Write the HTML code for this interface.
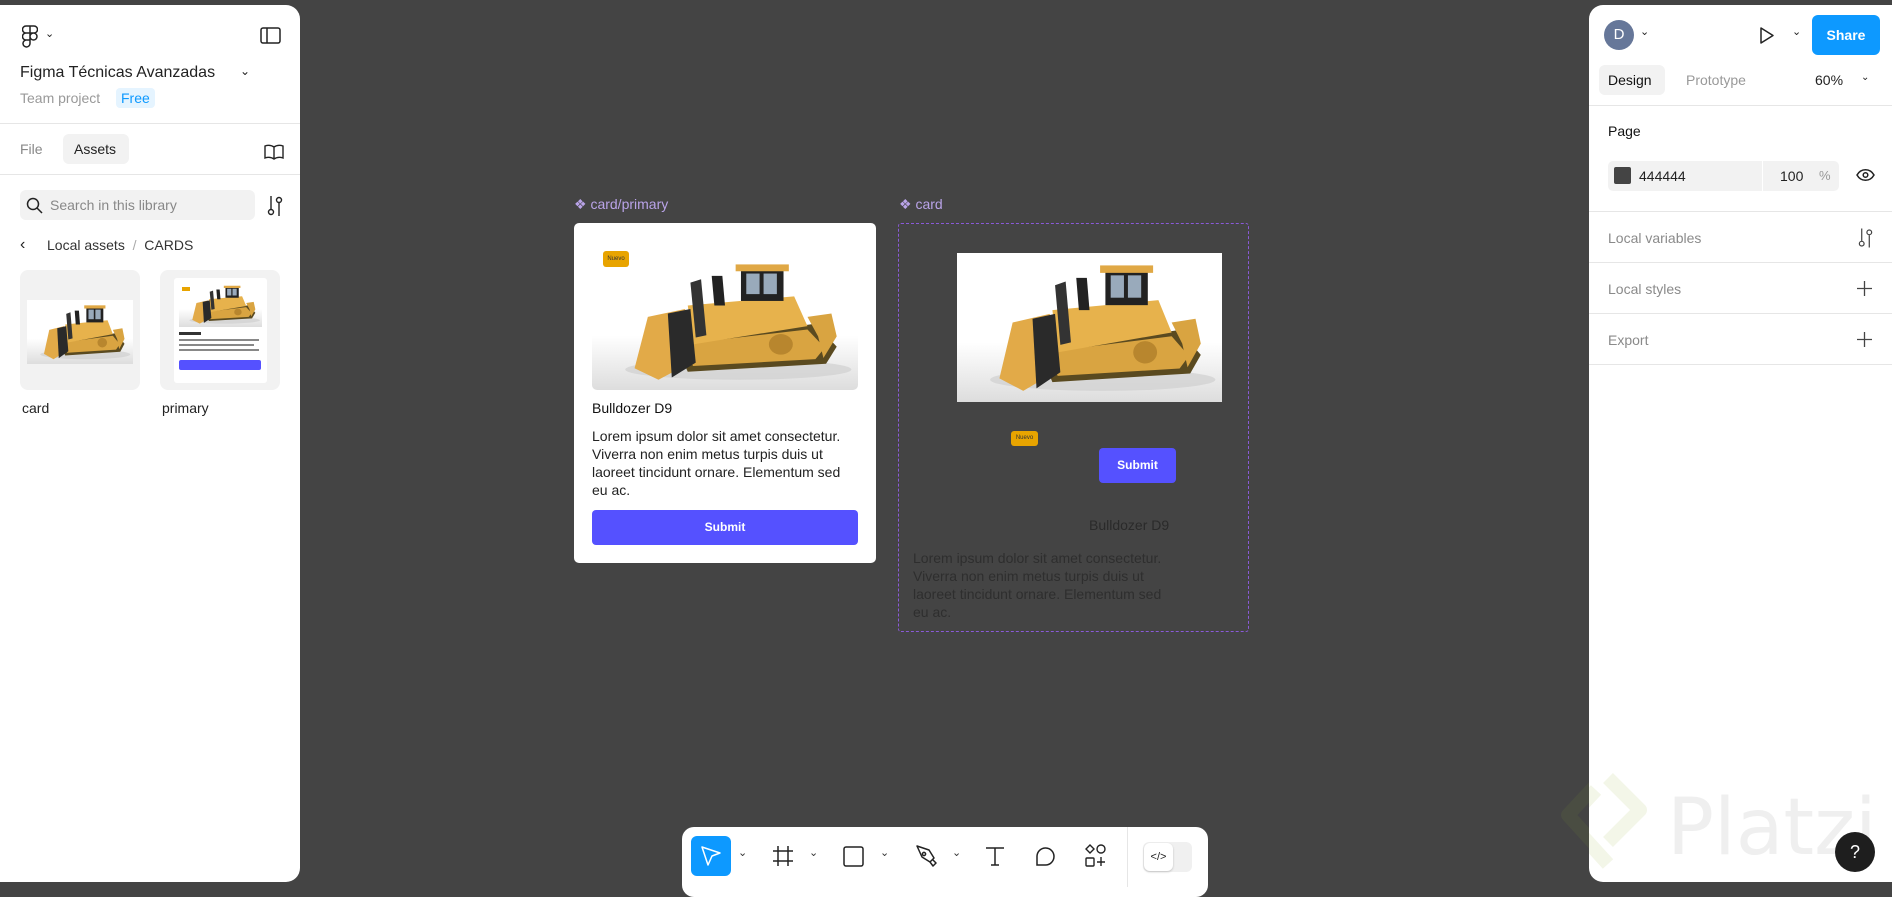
<!DOCTYPE html>
<html><head><meta charset="utf-8"><style>
*{box-sizing:border-box;margin:0;padding:0}
body{width:1892px;height:885px;background:#444;font-family:"Liberation Sans",sans-serif;position:relative;overflow:hidden;color:#222}
.a{position:absolute}
.panel{background:#fff;border-radius:14px}
.hr{position:absolute;left:0;right:0;height:1px;background:#e6e6e6}
.t{position:absolute;white-space:nowrap;line-height:1}
</style></head><body>
<svg width="0" height="0" style="position:absolute">
<defs>
<linearGradient id="g" x1="0" y1="0" x2="0" y2="1"><stop offset="0.6" stop-color="#fff"/><stop offset="1" stop-color="#ddd"/></linearGradient>
<symbol id="dz" viewBox="0 0 200 120" preserveAspectRatio="none">
<rect width="200" height="120" fill="url(#g)"/>
<ellipse cx="110" cy="102" rx="85" ry="9" fill="#ccc" opacity=".6"/>
<path d="M62 78 L168 62 L184 82 L176 97 L72 104 Z" fill="#5a4a20"/>
<path d="M66 80 L162 67 L175 83 L168 93 L76 99 Z" fill="#d9a441"/>
<path d="M72 46 L152 38 L162 64 L76 80 Z" fill="#e7b24c"/>
<rect x="112" y="14" width="32" height="28" fill="#222"/>
<rect x="116" y="18" width="10" height="18" fill="#9ab"/><rect x="129" y="18" width="10" height="18" fill="#9ab"/>
<rect x="108" y="10" width="40" height="6" fill="#e0a845"/>
<path d="M90 20 L98 20 L100 46 L92 46 Z" fill="#222"/>
<path d="M74 26 L82 23 L86 72 L78 74 Z" fill="#333"/>
<path d="M42 56 L70 49 L74 96 L50 111 L32 101 Z" fill="#e2aa48"/>
<path d="M57 53 L74 49 L78 96 L60 109 Z" fill="#2a2a2a"/>
<path d="M162 56 L180 53 L184 73 L174 92 L170 73 Z" fill="#d9a441"/>
<circle cx="142" cy="80" r="9" fill="#b8862e"/>
</symbol>
</defs></svg>

<!-- Left panel -->
<div class="a panel" style="left:0;top:5px;width:300px;height:877px;border-radius:0 14px 14px 0">
<svg class="a" style="left:22px;top:20px" width="16" height="24" viewBox="0 0 16 24" fill="none" stroke="#222" stroke-width="1.5"><path d="M4 1h4v7H4a3.5 3.5 0 010-7zM8 1h4a3.5 3.5 0 010 7H8zM4 8h4v7H4a3.5 3.5 0 010-7zM8 11.5a3.5 3.5 0 107 0 3.5 3.5 0 10-7 0zM4 15h4v3.5A3.5 3.5 0 114 15z"/></svg>
<div class="t" style="left:45px;top:24px;font-size:11px">⌄</div>
<svg class="a" style="left:260px;top:22px" width="21" height="17" viewBox="0 0 21 17" fill="none" stroke="#222" stroke-width="1.5"><rect x="1" y="1" width="19" height="15" rx="2"/><path d="M7 1v15"/></svg>
<div class="t" style="left:20px;top:60px;font-size:16px;color:#222">Figma Técnicas Avanzadas</div>
<div class="t" style="left:240px;top:60px;font-size:12px">⌄</div>
<div class="t" style="left:20px;top:86px;font-size:14px;color:#999">Team project</div>
<div class="a" style="left:116px;top:83px;width:39px;height:20px;background:#e5f4ff;border-radius:4px"></div>
<div class="t" style="left:121px;top:86px;font-size:14px;color:#0d99ff">Free</div>
<div class="hr" style="top:118px"></div>
<div class="t" style="left:20px;top:137px;font-size:14px;color:#888">File</div>
<div class="a" style="left:63px;top:129px;width:66px;height:30px;background:#f2f2f2;border-radius:6px"></div>
<div class="t" style="left:74px;top:137px;font-size:14px;color:#222">Assets</div>
<svg class="a" style="left:264px;top:139px" width="20" height="16" viewBox="0 0 20 16" fill="none" stroke="#222" stroke-width="1.4"><path d="M10 3C7 1 4 1 1 2v12c3-1 6-1 9 1 3-2 6-2 9-1V2c-3-1-6-1-9 1zM10 3v12"/></svg>
<div class="hr" style="top:169px"></div>
<div class="a" style="left:20px;top:185px;width:235px;height:30px;background:#f2f2f2;border-radius:6px"></div>
<svg class="a" style="left:26px;top:192px" width="17" height="17" viewBox="0 0 17 17" fill="none" stroke="#222" stroke-width="1.5"><circle cx="7" cy="7" r="5.5"/><path d="M11 11l5 5"/></svg>
<div class="t" style="left:50px;top:193px;font-size:14px;color:#888">Search in this library</div>
<svg class="a" style="left:266px;top:190px" width="18" height="22" viewBox="0 0 18 22" fill="none" stroke="#222" stroke-width="1.4"><path d="M5 1v13M13 8v13"/><circle cx="5" cy="17" r="2.5"/><circle cx="13" cy="5" r="2.5"/></svg>
<div class="t" style="left:20px;top:232px;font-size:16px;color:#222">‹</div>
<div class="t" style="left:47px;top:233px;font-size:14px;color:#333">Local assets <span style="color:#aaa">&nbsp;/&nbsp;</span> CARDS</div>
<div class="a" style="left:20px;top:265px;width:120px;height:120px;background:#f2f2f2;border-radius:8px"></div>
<svg class="a" style="left:27px;top:295px" width="106" height="64"><use href="#dz" width="106" height="64"/></svg>
<div class="a" style="left:160px;top:265px;width:120px;height:120px;background:#f2f2f2;border-radius:8px"></div>
<div class="a" style="left:174px;top:273px;width:93px;height:105px;background:#fff;border-radius:3px">
<svg class="a" style="left:5px;top:4px" width="83" height="45"><use href="#dz" width="83" height="45"/></svg>
<div class="a" style="left:8px;top:9px;width:8px;height:4px;background:#e8a400"></div>
<div class="a" style="left:5px;top:54px;width:22px;height:3px;background:#333"></div>
<div class="a" style="left:5px;top:61px;width:80px;height:2px;background:#888"></div>
<div class="a" style="left:5px;top:66px;width:75px;height:2px;background:#888"></div>
<div class="a" style="left:5px;top:71px;width:80px;height:2px;background:#888"></div>
<div class="a" style="left:5px;top:82px;width:82px;height:10px;background:#5551ff;border-radius:2px"></div>
</div>
<div class="t" style="left:22px;top:396px;font-size:14px;color:#222">card</div>
<div class="t" style="left:162px;top:396px;font-size:14px;color:#222">primary</div>
</div>

<!-- canvas: card/primary -->
<div class="t" style="left:574px;top:197px;font-size:14px;color:#b9a3e8">❖ card/primary</div>
<div class="a" style="left:574px;top:223px;width:302px;height:340px;background:#fff;border-radius:5px">
<svg class="a" style="left:18px;top:30px;border-radius:5px" width="266" height="137"><use href="#dz" width="266" height="137"/></svg>
<div class="a" style="left:29px;top:28px;width:26px;height:16px;background:#e8a400;border-radius:3px;font-size:6px;line-height:16px;text-align:center;color:#333">Nuevo</div>
<div class="t" style="left:18px;top:178px;font-size:14px;color:#111">Bulldozer D9</div>
<div class="a" style="left:18px;top:204px;width:262px;font-size:14px;line-height:18px;color:#222">Lorem ipsum dolor sit amet consectetur. Viverra non enim metus turpis duis ut laoreet tincidunt ornare. Elementum sed eu ac.</div>
<div class="a" style="left:18px;top:287px;width:266px;height:35px;background:#5551ff;border-radius:4px;color:#fff;font-size:12px;font-weight:bold;line-height:35px;text-align:center">Submit</div>
</div>

<!-- canvas: card -->
<div class="t" style="left:899px;top:197px;font-size:14px;color:#b9a3e8">❖ card</div>
<div class="a" style="left:898px;top:223px;width:351px;height:409px;border:1.3px dashed #8a5ad8;border-radius:3px"></div>
<svg class="a" style="left:957px;top:253px" width="265" height="149"><use href="#dz" width="265" height="149"/></svg>
<div class="a" style="left:1011px;top:431px;width:27px;height:15px;background:#e8a400;border-radius:3px;font-size:6px;line-height:15px;text-align:center;color:#333">Nuevo</div>
<div class="a" style="left:1099px;top:448px;width:77px;height:35px;background:#5551ff;border-radius:4px;color:#fff;font-size:12px;font-weight:bold;line-height:35px;text-align:center">Submit</div>
<div class="t" style="left:1089px;top:518px;font-size:14px;color:#2a2a2a">Bulldozer D9</div>
<div class="a" style="left:913px;top:549px;width:262px;font-size:14px;line-height:18px;color:#2e2e2e">Lorem ipsum dolor sit amet consectetur. Viverra non enim metus turpis duis ut laoreet tincidunt ornare. Elementum sed eu ac.</div>

<!-- toolbar -->
<div class="a" style="left:682px;top:827px;width:526px;height:70px;background:#fff;border-radius:12px">
<div class="a" style="left:9px;top:9px;width:40px;height:40px;background:#0d99ff;border-radius:6px"></div>
<svg class="a" style="left:18px;top:18px" width="22" height="22" viewBox="0 0 22 22" fill="none" stroke="#fff" stroke-width="1.5" stroke-linejoin="round"><path d="M2 2l18 6-8 3-4 9z"/></svg>
<div class="t" style="left:56px;top:21px;font-size:11px;color:#333">⌄</div>
<svg class="a" style="left:90px;top:18px" width="22" height="22" viewBox="0 0 22 22" fill="none" stroke="#222" stroke-width="1.5"><path d="M6 1v20M16 1v20M1 6h20M1 16h20"/></svg>
<div class="t" style="left:127px;top:21px;font-size:11px;color:#333">⌄</div>
<svg class="a" style="left:161px;top:19px" width="21" height="21" viewBox="0 0 21 21" fill="none" stroke="#222" stroke-width="1.5"><rect x="1" y="1" width="19" height="19" rx="2"/></svg>
<div class="t" style="left:198px;top:21px;font-size:11px;color:#333">⌄</div>
<svg class="a" style="left:233px;top:17px" width="22" height="24" viewBox="0 0 22 24" fill="none" stroke="#222" stroke-width="1.5" stroke-linejoin="round"><path d="M2 2l12 4 5 8-4 4-8-5zM15 18l3 4 3-3-3-3"/><circle cx="9" cy="10" r="1.6"/></svg>
<div class="t" style="left:270px;top:21px;font-size:11px;color:#333">⌄</div>
<svg class="a" style="left:303px;top:19px" width="20" height="20" viewBox="0 0 20 20" fill="none" stroke="#222" stroke-width="1.5"><path d="M1 2h18M10 2v17M6 19h8"/></svg>
<svg class="a" style="left:353px;top:19px" width="22" height="21" viewBox="0 0 22 21" fill="none" stroke="#222" stroke-width="1.5"><path d="M2 19V10a8.5 8.5 0 118.5 9z"/></svg>
<svg class="a" style="left:403px;top:17px" width="22" height="24" viewBox="0 0 22 24" fill="none" stroke="#222" stroke-width="1.4"><path d="M5 1l4 4-4 4-4-4z"/><circle cx="16" cy="5" r="4"/><rect x="1" y="14" width="8" height="8" rx="1"/><path d="M16 13v9M12 18h8"/></svg>
<div class="a" style="left:445px;top:0;width:1px;height:60px;background:#e6e6e6"></div>
<div class="a" style="left:461px;top:15px;width:49px;height:30px;background:#f0f0f0;border-radius:6px"></div>
<div class="a" style="left:462px;top:16px;width:29px;height:28px;background:#fff;border-radius:6px;box-shadow:0 1px 2px rgba(0,0,0,.2);font-size:11px;line-height:28px;text-align:center;color:#222">&lt;/&gt;</div>
</div>

<!-- Right panel -->
<div class="a panel" style="left:1589px;top:5px;width:303px;height:877px;border-radius:14px 0 0 14px;overflow:hidden">
<div class="a" style="left:15px;top:15px;width:30px;height:30px;border-radius:50%;background:#667799;color:#fff;font-size:15px;line-height:30px;text-align:center">D</div>
<div class="t" style="left:51px;top:22px;font-size:11px">⌄</div>
<svg class="a" style="left:170px;top:21px" width="16" height="19" viewBox="0 0 16 19" fill="none" stroke="#222" stroke-width="1.5" stroke-linejoin="round"><path d="M2 2l12 7.5L2 17z"/></svg>
<div class="t" style="left:203px;top:22px;font-size:11px">⌄</div>
<div class="a" style="left:223px;top:10px;width:68px;height:40px;background:#0d99ff;border-radius:6px;color:#fff;font-size:14px;font-weight:bold;line-height:40px;text-align:center">Share</div>
<div class="a" style="left:10px;top:60px;width:66px;height:30px;background:#f2f2f2;border-radius:6px"></div>
<div class="t" style="left:19px;top:68px;font-size:14px;color:#111">Design</div>
<div class="t" style="left:97px;top:68px;font-size:14px;color:#999">Prototype</div>
<div class="t" style="left:226px;top:68px;font-size:14px;color:#222">60%</div>
<div class="t" style="left:272px;top:68px;font-size:10px">⌄</div>
<div class="hr" style="top:100px"></div>
<div class="t" style="left:19px;top:119px;font-size:14px;color:#111">Page</div>
<div class="a" style="left:19px;top:156px;width:231px;height:30px;background:#f2f2f2;border-radius:5px"></div>
<div class="a" style="left:173px;top:156px;width:1px;height:30px;background:#fff"></div>
<div class="a" style="left:25px;top:162px;width:17px;height:17px;background:#444;border-radius:2px"></div>
<div class="t" style="left:50px;top:164px;font-size:14px;color:#222">444444</div>
<div class="t" style="left:191px;top:164px;font-size:14px;color:#222">100</div>
<div class="t" style="left:230px;top:164px;font-size:13px;color:#999">%</div>
<svg class="a" style="left:267px;top:163px" width="19" height="14" viewBox="0 0 19 14" fill="none" stroke="#222" stroke-width="1.5"><path d="M1 7c4-7 13-7 17 0-4 7-13 7-17 0z"/><circle cx="9.5" cy="7" r="2.3"/></svg>
<div class="hr" style="top:206px"></div>
<div class="t" style="left:19px;top:226px;font-size:14px;color:#8a8a8a">Local variables</div>
<svg class="a" style="left:268px;top:222px" width="17" height="22" viewBox="0 0 18 22" fill="none" stroke="#444" stroke-width="1.3"><path d="M5 1v13M13 8v13"/><circle cx="5" cy="17" r="2.5"/><circle cx="13" cy="5" r="2.5"/></svg>
<div class="hr" style="top:257px"></div>
<div class="t" style="left:19px;top:277px;font-size:14px;color:#8a8a8a">Local styles</div>
<svg class="a" style="left:268px;top:276px" width="15" height="15" stroke="#444" stroke-width="1.3"><path d="M7.5 0v15M0 7.5h15"/></svg>
<div class="hr" style="top:308px"></div>
<div class="t" style="left:19px;top:328px;font-size:14px;color:#8a8a8a">Export</div>
<svg class="a" style="left:268px;top:327px" width="15" height="15" stroke="#444" stroke-width="1.3"><path d="M7.5 0v15M0 7.5h15"/></svg>
<div class="hr" style="top:359px"></div>
<svg class="a" style="left:-31px;top:765px" width="90" height="110" viewBox="0 0 90 110" fill="none" stroke="#f3f6e8" stroke-width="14" stroke-linejoin="round"><path d="M50 8L82 40 50 72M38 20L10 50l40 44"/></svg>
<div class="t" style="left:78px;top:784px;font-size:78px;color:#efefef;font-family:'DejaVu Sans',sans-serif">Platzi</div>
<div class="a" style="left:246px;top:827px;width:40px;height:40px;border-radius:50%;background:#1e1e1e;color:#fff;font-size:18px;line-height:40px;text-align:center">?</div>
</div>
<svg class="a" style="left:1558px;top:765px" width="31" height="110" viewBox="0 0 31 110" fill="none" stroke="#4a4d42" stroke-width="14" stroke-linejoin="round"><path d="M38 20L10 50l40 44"/></svg>
</body></html>
